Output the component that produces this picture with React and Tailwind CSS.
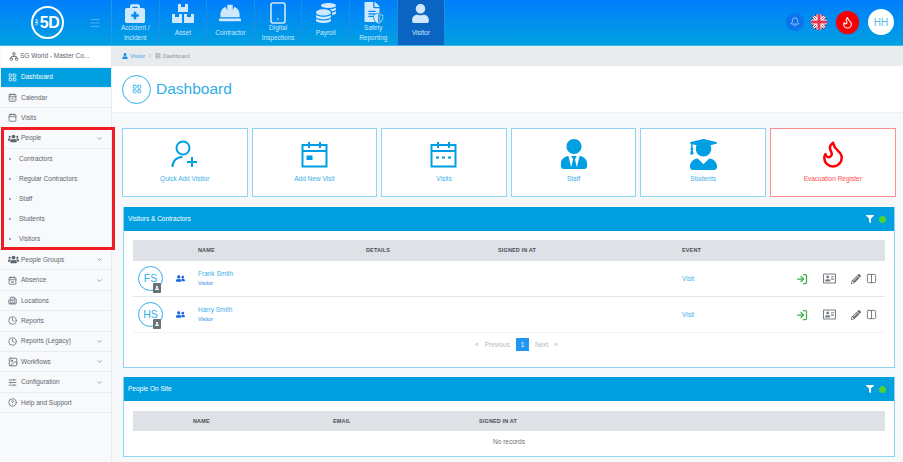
import { Menu, Smartphone, ChevronDown, Flame, LogIn, Columns2, Bell, Calendar, CalendarDays, Clock, HelpCircle, SlidersHorizontal, Image, Building2, Network, LayoutGrid, CalendarX } from 'lucide-react';
import { FaUserTie, FaUserGraduate, FaFilter, FaRegAddressCard, FaPencilAlt, FaUserFriends, FaUser, FaBriefcaseMedical, FaHardHat, FaCoins, FaFileAlt, FaShieldAlt, FaUsers } from 'react-icons/fa';

function BoxesIcon() {
  return (
    <svg width="22" height="20" viewBox="0 0 22 20" fill="currentColor">
      <path d="M6 1h3v3h4V1h3v8H6z" />
      <path d="M0 11h3v3h4v-3h3v9H1a1 1 0 0 1-1-1z" />
      <path d="M12 11h3v3h4v-3h3v8a1 1 0 0 1-1 1h-9z" />
    </svg>
  );
}

const NAV = [
  { label: ['Accident /', 'Incident'], icon: <FaBriefcaseMedical size={20} /> },
  { label: ['Asset'], icon: <BoxesIcon /> },
  { label: ['Contractor'], icon: <FaHardHat size={22} /> },
  { label: ['Digital', 'Inspections'], icon: <Smartphone size={24} strokeWidth={1.6} /> },
  { label: ['Payroll'], icon: <FaCoins size={20} /> },
  {
    label: ['Safety', 'Reporting'],
    icon: (
      <span className="relative block w-[22px] h-[22px]">
        <FaFileAlt size={20} />
        <FaShieldAlt size={11} className="absolute right-0 bottom-0 text-[#cfe8fb] stroke-[#0d8fe8] stroke-[40]" />
      </span>
    ),
  },
  { label: ['Visitor'], icon: <FaUser size={19} />, active: true },
];

const SIDE_TOP = [
  { label: 'Dashboard', icon: <LayoutGrid size={9} />, active: true },
  { label: 'Calendar', icon: <CalendarDays size={9} /> },
  { label: 'Visits', icon: <Calendar size={9} /> },
];

const SIDE_BOTTOM = [
  { label: 'People Groups', icon: <FaUsers size={11} />, arrow: true },
  { label: 'Absence', icon: <CalendarX size={9} />, arrow: true },
  { label: 'Locations', icon: <Building2 size={9} /> },
  { label: 'Reports', icon: <Clock size={9} /> },
  { label: 'Reports (Legacy)', icon: <Clock size={9} />, arrow: true },
  { label: 'Workflows', icon: <Image size={10} />, arrow: true },
  { label: 'Configuration', icon: <SlidersHorizontal size={9} />, arrow: true },
  { label: 'Help and Support', icon: <HelpCircle size={9} /> },
];

const PEOPLE = ['Contractors', 'Regular Contractors', 'Staff', 'Students', 'Visitors'];

const VISITORS = [
  { initials: 'FS', name: 'Frank Smith' },
  { initials: 'HS', name: 'Harry Smith' },
];

function CalIcon({ dots }) {
  return (
    <svg width="27" height="27" viewBox="0 0 27 27" fill="none" stroke="#009fe3" strokeWidth="2">
      <rect x="1.5" y="4" width="24" height="21.5" />
      <path d="M1.5 10h24M8 1v6M19 1v6" />
      {dots ? (
        <path d="M6 16.5h3M12 16.5h3M18 16.5h3" strokeWidth="2.2" />
      ) : (
        <rect x="5.5" y="14.5" width="6" height="4.5" fill="#009fe3" stroke="none" />
      )}
    </svg>
  );
}

function AddUserIcon() {
  return (
    <svg width="27" height="28" viewBox="0 0 27 28" fill="none" stroke="#009fe3" strokeWidth="2">
      <circle cx="12" cy="8" r="6.5" />
      <path d="M1.5 27c0-6 4-10 10-10M16 22h10M21 17v10" />
    </svg>
  );
}

const CARDS = [
  { label: 'Quick Add Visitor', icon: <AddUserIcon /> },
  { label: 'Add New Visit', icon: <CalIcon /> },
  { label: 'Visits', icon: <CalIcon dots /> },
  { label: 'Staff', icon: <FaUserTie size={30} /> },
  { label: 'Students', icon: <FaUserGraduate size={31} /> },
  { label: 'Evacuation Register', icon: <Flame size={30} strokeWidth={2} />, red: true },
];

function SideRow({ item }) {
  return (
    <div className={`h-[20.4px] flex items-center pl-[7px] pr-[8px] border-b border-[#e9ecef] text-[6.5px] ${item.active ? 'bg-[#009fe0] text-white' : 'text-[#5c6670]'}`}>
      <span className="w-[13px] flex shrink-0 items-center">{item.icon}</span>
      <span className="flex-1">{item.label}</span>
      {item.arrow && <ChevronDown size={7} />}
    </div>
  );
}

function PanelHead({ title }) {
  return (
    <div className="h-[24px] bg-[#009fe0] flex items-center justify-between pl-[4px] pr-[8px] text-white text-[6.5px]">
      <span>{title}</span>
      <div className="flex items-center gap-[5px]">
        <FaFilter size={8} />
        <span className="w-[7px] h-[7px] rounded-full bg-[#4cd137]" />
      </div>
    </div>
  );
}

export default function App() {
  return (
    <div className="w-[903px] h-[462px] overflow-hidden bg-white flex flex-col font-['Liberation_Sans',Arial,sans-serif]">
      {/* Top bar */}
      <header className="h-[46px] shrink-0 flex bg-gradient-to-b from-[#007dfb] to-[#00a0e0] text-[#cfe8fb] border-b border-[#3fb4ea]">
        <div className="w-[112px] shrink-0 flex items-center pl-[31px] border-r border-[#1b9be8]">
          <div className="w-[33px] h-[33px] rounded-full border-2 border-white flex items-center justify-center text-white text-[16px] font-bold leading-none tracking-tight">
            <span className="text-[3px] font-normal [writing-mode:vertical-rl] rotate-180 mr-px tracking-normal">SAM</span>
            5D
          </div>
          <Menu size={12} strokeWidth={1} className="ml-[25px] text-[#9fd0f5]" />
        </div>
        {NAV.map(n => (
          <div key={n.label[0]} className={`w-[47.6px] flex flex-col items-center pt-[1px] border-r border-[#1b8fe8] text-[6.5px] leading-[10px] text-center ${n.active ? 'bg-[#0a64c2]' : ''}`}>
            <div className="h-[24px] shrink-0 flex items-center justify-center text-[#cfe8fb]">{n.icon}</div>
            <div className="h-[20px] shrink-0 -mt-[2px] flex flex-col justify-center">
              {n.label.map(l => <div key={l}>{l}</div>)}
            </div>
          </div>
        ))}
        <div className="flex-1 flex items-center justify-end pr-[9px] pb-[1px]">
          <div className="w-[18px] h-[18px] rounded-full bg-[#0b74ea] flex items-center justify-center text-[#a8d4fa]">
            <Bell size={10} />
          </div>
          <svg width="16" height="16" viewBox="0 0 16 16" className="ml-[7px] rounded-full">
            <rect width="16" height="16" fill="#2b3a6b" />
            <path d="M0 0L16 16M16 0L0 16" stroke="#fff" strokeWidth="3" />
            <path d="M0 0L16 16M16 0L0 16" stroke="#e8344e" strokeWidth="1" />
            <path d="M8 0V16M0 8H16" stroke="#fff" strokeWidth="5" />
            <path d="M8 0V16M0 8H16" stroke="#e8344e" strokeWidth="3" />
          </svg>
          <div className="ml-[9px] w-[23px] h-[23px] rounded-full bg-[#f80000] flex items-center justify-center text-white shadow-[0_0_0_1px_#1f7fd6]">
            <Flame size={13} />
          </div>
          <div className="ml-[9px] w-[26px] h-[26px] rounded-full bg-white flex items-center justify-center text-[#5db7ea] text-[10px]">HH</div>
        </div>
      </header>

      <div className="flex-1 flex min-h-0">
        {/* Sidebar */}
        <aside className="relative w-[112px] shrink-0 bg-[#f8f9fb] border-r border-[#e9ecef] pl-px">
          <div className="h-[21.5px] flex items-center pl-[7px] text-[6.5px] text-[#5c6670] bg-white border-b border-[#e9ecef]">
            <Network size={9} className="w-[12px] shrink-0" />
            SG World - Master Co...
          </div>
          {SIDE_TOP.map(i => <SideRow key={i.label} item={i} />)}
          <SideRow item={{ label: 'People', icon: <FaUsers size={11} />, arrow: true }} />
          {PEOPLE.map(p => (
            <div key={p} className="h-[20px] flex items-center pl-[8px] text-[6.5px] text-[#5c6670]">
              <span className="w-[2px] h-[2px] rounded-full bg-[#7a848e] mr-[8px]" />
              {p}
            </div>
          ))}
          <div className="h-[1px]" />
          {SIDE_BOTTOM.map(i => <SideRow key={i.label} item={i} />)}
          {/* red highlight round the People group */}
          <div className="absolute left-[1px] top-[81px] w-[114px] h-[123px] border-[3px] border-[#ee1c25] pointer-events-none" />
        </aside>

        {/* Main */}
        <main className="flex-1 min-w-0 bg-[#f7f8fa]">
          <div className="h-[20px] bg-[#e9ecef] flex items-center pl-[10px] text-[5.5px] text-[#8a949e]">
            <FaUser size={6} className="text-[#1d8fe0] mr-[2px]" />
            <span className="text-[#3aa6e8]">Visitor</span>
            <span className="mx-[4px]">/</span>
            <LayoutGrid size={6} className="mr-[2px]" />
            Dashboard
          </div>
          <div className="h-[47px] bg-white flex items-center pl-[10px] border-b border-[#eff1f4]">
            <div className="w-[29px] h-[29px] rounded-full border border-[#30aee8] flex items-center justify-center text-[#30aee8]">
              <LayoutGrid size={10} />
            </div>
            <h1 className="ml-[5px] text-[15.5px] text-[#30aee8] font-normal">Dashboard</h1>
          </div>

          <div className="pl-[10px] pr-[7px] pt-[15px]">
            <div className="flex gap-[4px]">
              {CARDS.map(c => (
                <div key={c.label} className={`w-[125.6px] h-[69px] bg-white border flex flex-col items-center ${c.red ? 'border-[#ff8f8f] text-[#ff0000]' : 'border-[#8fd3f5] text-[#009fe3]'}`}>
                  <div className="h-[43px] pt-[7px] flex items-center justify-center">{c.icon}</div>
                  <div className={`text-[6.5px] mt-[2px] ${c.red ? 'text-[#ff4d4d]' : 'text-[#3eaee8]'}`}>{c.label}</div>
                </div>
              ))}
            </div>

            <section className="mt-[10px] ml-px w-[772px] h-[161px] bg-white border border-[#8fd3f5] border-t-0">
              <PanelHead title="Visitors & Contractors" />
              <div className="px-[9px] pt-[9px]">
                <div className="h-[21px] bg-[#dee1e5] grid grid-cols-[65px_168px_132px_184px_1fr] items-center text-[5.5px] font-bold tracking-wide text-[#4a5058]">
                  <span />
                  <span>NAME</span>
                  <span>DETAILS</span>
                  <span>SIGNED IN AT</span>
                  <span>EVENT</span>
                </div>
                {VISITORS.map((v, i) => (
                  <div key={v.name} className={`h-[36px] border-b grid grid-cols-[65px_168px_132px_184px_1fr] items-center ${i === 0 ? 'border-[#e4e6e9]' : 'border-[#f2f3f5]'}`}>
                    <div className="relative flex items-center h-full pl-[5px]">
                      <div className="w-[25px] h-[25px] rounded-full border border-[#30aee8] flex items-center justify-center text-[10.5px] text-[#30aee8]">{v.initials}</div>
                      <span className="absolute left-[20px] top-[22px] w-[8px] h-[10px] bg-[#6d7278] rounded-[1px] flex items-center justify-center text-white">
                        <FaUser size={4} />
                      </span>
                      <FaUserFriends size={9} className="ml-[13px] text-[#1568e0]" />
                    </div>
                    <div className="leading-[10px]">
                      <div className="text-[6.5px] text-[#3eaee8]">{v.name}</div>
                      <div className="text-[5.5px] text-[#2f86e6] -mt-px">Visitor</div>
                    </div>
                    <span />
                    <span />
                    <div className="flex items-center">
                      <span className="w-[114px] text-[6.5px] text-[#3eaee8]">Visit</span>
                      <LogIn size={12} strokeWidth={2.5} className="text-[#3fae49]" />
                      <FaRegAddressCard size={13} className="ml-[15px] text-[#777d84]" />
                      <FaPencilAlt size={10} className="ml-[15px] text-[#6d7278]" />
                      <Columns2 size={11} className="ml-[5px] text-[#6d7278]" />
                    </div>
                  </div>
                ))}
                <div className="mt-[5px] flex items-center justify-center gap-[6px] pl-[15px] text-[6.5px] text-[#b4bac0]">
                  <span>«</span>
                  <span>Previous</span>
                  <span className="w-[13px] h-[13px] bg-[#2196f3] text-white flex items-center justify-center">1</span>
                  <span>Next</span>
                  <span>»</span>
                </div>
              </div>
            </section>

            <section className="mt-[9px] ml-px w-[772px] h-[80px] bg-white border border-[#8fd3f5] border-t-0">
              <PanelHead title="People On Site" />
              <div className="px-[9px] pt-[10px]">
                <div className="h-[20px] bg-[#dee1e5] grid grid-cols-[140px_146px_1fr] pl-[60px] items-center text-[5.5px] font-bold tracking-wide text-[#4a5058]">
                  <span>NAME</span>
                  <span>EMAIL</span>
                  <span>SIGNED IN AT</span>
                </div>
                <div className="text-center text-[6.5px] text-[#6a727a] mt-[6px]">No records</div>
              </div>
            </section>
          </div>
        </main>
      </div>
    </div>
  );
}
